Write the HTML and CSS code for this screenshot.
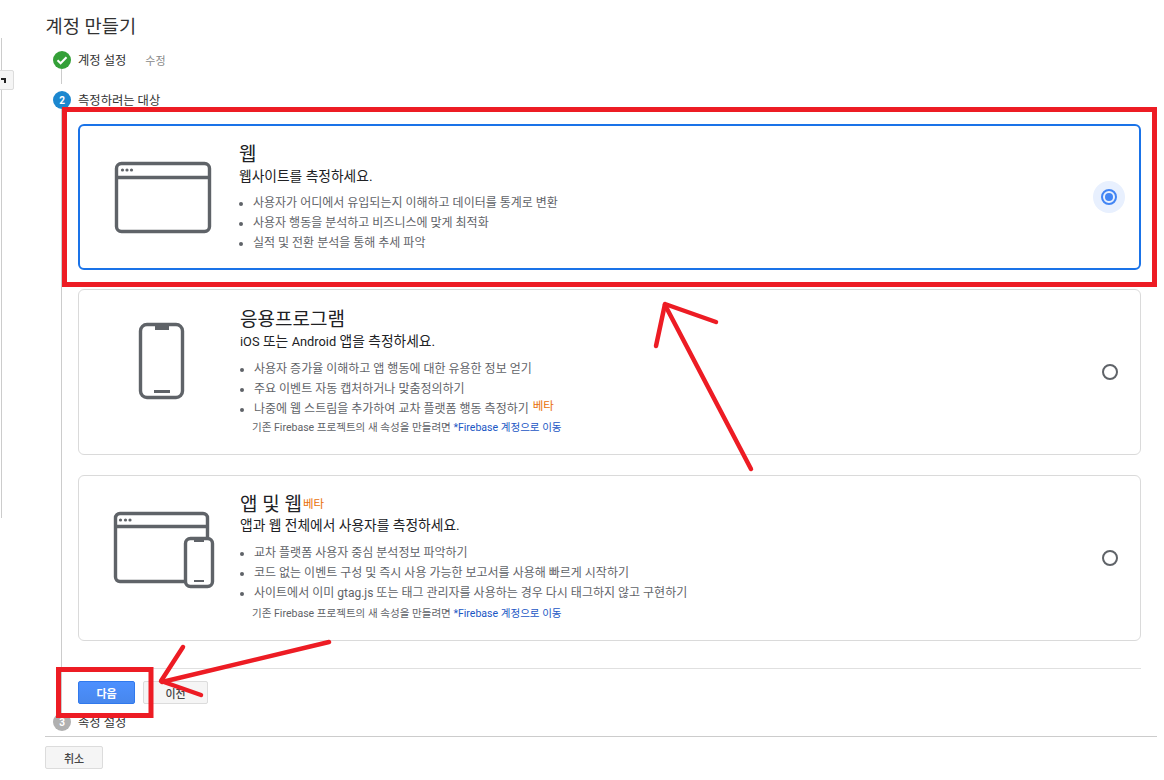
FILE: index.html
```html
<!DOCTYPE html>
<html lang="ko">
<head>
<meta charset="utf-8">
<title>계정 만들기</title>
<link rel="stylesheet" href="styles.css">
</head>
<body>
<div class="page">
  <aside class="rail"><button class="rail-btn"><span class="rail-glyph"></span></button></aside>
  <main class="main">
    <h1 class="title">계정 만들기</h1>
    <div class="step step-done">
      <span class="badge badge-green"><svg width="12" height="12" viewBox="0 0 12 12"><path d="M1.5 6.3 4.6 9.3 10.5 3.2" fill="none" stroke="#fff" stroke-width="2"/></svg></span>
      <span class="step-label">계정 설정</span><span class="step-edit">수정</span>
    </div>
    <div class="connector"></div>
    <div class="step step-active">
      <span class="badge badge-blue">2</span>
      <span class="step-label">측정하려는 대상</span>
    </div>
    <div class="step-body">
      <section class="card card-selected">
        <div class="card-icon">
          <svg width="100" height="74" viewBox="0 0 100 74" fill="none" stroke="#5f6368" stroke-width="3.400">
            <rect x="3.500" y="3.500" width="93" height="68" rx="5"/>
            <path d="M3.500 17.500H96.500"/>
            <g fill="#5f6368" stroke="none"><circle cx="9.500" cy="10" r="1.600"/><circle cx="14" cy="10" r="1.600"/><circle cx="18.500" cy="10" r="1.600"/></g>
          </svg>
        </div>
        <div class="card-text">
          <h2 class="card-title">웹</h2>
          <p class="card-sub">웹사이트를 측정하세요.</p>
          <ul class="points">
            <li>사용자가 어디에서 유입되는지 이해하고 데이터를 통계로 변환</li>
            <li>사용자 행동을 분석하고 비즈니스에 맞게 최적화</li>
            <li>실적 및 전환 분석을 통해 추세 파악</li>
          </ul>
        </div>
        <div class="radio-wrap radio-halo"><span class="radio radio-on"></span></div>
      </section>
      <section class="card card-app">
        <div class="card-icon">
          <svg width="100" height="78" viewBox="0 0 100 78" fill="none" stroke="#5f6368" stroke-width="3.400">
            <rect x="28.500" y="2.500" width="42" height="73" rx="6.500"/>
            <path d="M43 2H57V8H43Z" fill="#5f6368" stroke="none"/>
            <path d="M42 69.500H58" stroke-width="3"/>
          </svg>
        </div>
        <div class="card-text">
          <h2 class="card-title">응용프로그램</h2>
          <p class="card-sub"><span class="latin">iOS</span> 또는 <span class="latin">Android</span> 앱을 측정하세요.</p>
          <ul class="points">
            <li>사용자 증가율 이해하고 앱 행동에 대한 유용한 정보 얻기</li>
            <li>주요 이벤트 자동 캡처하거나 맞춤정의하기</li>
            <li>나중에 웹 스트림을 추가하여 교차 플랫폼 행동 측정하기 <span class="beta">베타</span></li>
          </ul>
          <p class="note">기존 Firebase 프로젝트의 새 속성을 만들려면 <a class="link">*Firebase 계정으로 이동</a></p>
        </div>
        <div class="radio-wrap"><span class="radio"></span></div>
      </section>
      <section class="card card-both">
        <div class="card-icon">
          <svg width="102" height="78" viewBox="0 0 102 78" fill="none" stroke="#5f6368" stroke-width="3.400">
            <path d="M72 70.500H7A4.500 4.500 0 0 1 2.500 66V7A4.500 4.500 0 0 1 7 2.500H90A4.500 4.500 0 0 1 94.500 7V26"/>
            <path d="M2.500 15.500H94.500"/>
            <g fill="#5f6368" stroke="none"><circle cx="7.500" cy="9" r="1.600"/><circle cx="12.500" cy="9" r="1.600"/><circle cx="17" cy="9" r="1.600"/></g>
            <rect x="72.500" y="27.500" width="27" height="48" rx="5"/>
            <path d="M81 27H91V31H81Z" fill="#5f6368" stroke="none"/>
            <path d="M81 70H91" stroke-width="2"/>
          </svg>
        </div>
        <div class="card-text">
          <h2 class="card-title">앱 및 웹<span class="beta beta-title">베타</span></h2>
          <p class="card-sub">앱과 웹 전체에서 사용자를 측정하세요.</p>
          <ul class="points">
            <li>교차 플랫폼 사용자 중심 분석정보 파악하기</li>
            <li>코드 없는 이벤트 구성 및 즉시 사용 가능한 보고서를 사용해 빠르게 시작하기</li>
            <li>사이트에서 이미 gtag.js 또는 태그 관리자를 사용하는 경우 다시 태그하지 않고 구현하기</li>
          </ul>
          <p class="note">기존 Firebase 프로젝트의 새 속성을 만들려면 <a class="link">*Firebase 계정으로 이동</a></p>
        </div>
        <div class="radio-wrap"><span class="radio"></span></div>
      </section>
      <div class="actions">
        <button class="btn btn-primary">다음</button>
        <button class="btn">이전</button>
      </div>
    </div>
    <div class="step step-todo">
      <span class="badge badge-gray">3</span>
      <span class="step-label">속성 설정</span>
    </div>
    <div class="footer"><button class="btn btn-cancel">취소</button></div>
  </main>
  <svg class="marks" width="1164" height="780" viewBox="0 0 1164 780" fill="none" stroke="#ed1c24">
    <rect x="64.500" y="109.500" width="1090" height="175" stroke-width="5"/>
    <rect x="58.500" y="669.500" width="92.500" height="46" stroke-width="5"/>
    <g stroke-width="4.500" stroke-linecap="round" stroke-linejoin="round">
      <path d="M751 469 665 305"/>
      <path d="M656 346 665 304 716 322"/>
      <path d="M329 642 162 682"/>
      <path d="M183 647 161 681 201 695"/>
    </g>
  </svg>
</div>
</body>
</html>
```
FILE: styles.css
```css
* { box-sizing: border-box; }
html, body { margin: 0; padding: 0; background: #fff; }
body { font-family: Roboto, "Noto Sans CJK KR", sans-serif; color: #333; }
.page { position: relative; width: 1164px; height: 780px; overflow: hidden; display: flex; }
.rail { position: relative; width: 45px; flex: none; padding-top: 38px; }
.rail::before { content: ""; display: block; width: 1px; height: 480px; margin-left: 1px; background: #ccc; }
.rail-btn { position: absolute; left: -2px; top: 70px; width: 16px; height: 20px; padding: 0; border: 1px solid #dcdcdc; background: #f5f5f5; border-radius: 2px; }
.rail-glyph { position: absolute; left: 2px; top: 7px; width: 5px; height: 5px; border-top: 2px solid #222; border-right: 2px solid #222; }
.main { width: 1112px; flex: none; }
.title { margin: 0; padding: 15px 0 0 0.5px; height: 51px; font-size: 18.700px; line-height: 24px; font-weight: 400; color: #333; }
.step { display: flex; align-items: center; height: 18px; font-size: 12.300px; color: #333; padding-left: 8px; }
.badge { width: 18px; height: 18px; border-radius: 50%; flex: none; display: flex; align-items: center; justify-content: center; color: #fff; font-size: 10px; font-weight: 700; margin-right: 7px; }
.badge-green { background: #34a038; }
.badge-blue { background: #1c87cf; }
.badge-gray { background: #b0b0b0; }
.step-edit { margin-left: 19px; color: #888; font-size: 11px; }
.connector { width: 1px; height: 15px; margin: 0 0 7px 16px; background: #ccc; }
.step-body { margin-left: 16px; padding: 15px 0 0 16px; border-left: 1px solid #ccc; width: 1080px; height: 604px; display: flex; flex-direction: column; }
.card { display: flex; width: 1063px; flex: none; border: 1px solid #dadada; border-radius: 6px; position: relative; }
.card-selected { height: 146px; border: 2px solid #1a73e8; margin-bottom: 19px; }
.card-app { height: 166px; margin-bottom: 20px; }
.card-both { height: 166px; }
.card-icon { width: 161px; flex: none; padding: 32px 0 0 33px; }
.card-selected .card-icon { width: 159px; padding-top: 34px; }
.card-both .card-icon { padding: 35px 0 0 34px; }
.card-text { flex: 1; padding-top: 18px; }
.card-selected .card-text { padding-top: 17px; }
.card-both .card-text { padding-top: 17px; }
.card-title { margin: 0; font-size: 19px; line-height: 24px; font-weight: 400; color: #202124; }
.card-both .card-title { margin-bottom: -1px; }
.card-sub { margin: 0; font-size: 13.750px; line-height: 18px; color: #202124; }
.latin { font-size: 12.800px; }
.points { margin: 8px 0 0; padding: 0 0 0 14px; list-style: disc; font-size: 12px; line-height: 20px; color: #5f6368; }
.card-both .points { margin-top: 9px; }
.beta { color: #e8710a; margin-left: 1px; font-size: 11.500px; line-height: 0; vertical-align: 3px; }
.beta-title { margin-left: 1px; vertical-align: 3px; }
.note { margin: -1px 0 0; padding-left: 12px; font-size: 10.550px; line-height: 20px; color: #5f6368; }
.card-both .note { margin-top: 1px; }
.link { color: #1a56c4; }
.radio-wrap { width: 32px; height: 32px; margin: 0 14px 0 0; align-self: center; display: flex; align-items: center; justify-content: center; border-radius: 50%; }
.radio-halo { background: #e8f0fe; }
.radio { width: 16px; height: 16px; border: 2px solid #5f6368; border-radius: 50%; display: block; }
.radio-on { border-color: #4285f4; position: relative; }
.radio-on::after { content: ""; position: absolute; left: 2px; top: 2px; width: 8px; height: 8px; border-radius: 50%; background: #4285f4; }
.actions { margin: 27px 0 0 -16px; padding: 12px 0 0 16px; border-top: 1px solid #e0e0e0; display: flex; gap: 8px; width: 1079px; }
.btn { width: 65px; height: 23px; padding: 0; border: 1px solid #dcdcdc; border-radius: 2px; background: #f5f5f5; color: #444; font-family: inherit; font-size: 11px; font-weight: 500; }
.btn-primary { width: 57px; background: linear-gradient(#4d90fe, #4787ed); border-color: #3079ed; color: #fff; font-weight: 700; }
.footer { margin-top: 5px; border-top: 1px solid #ccc; padding-top: 9px; }
.btn-cancel { width: 58px; }
.marks { position: absolute; left: 0; top: 0; pointer-events: none; }
```
